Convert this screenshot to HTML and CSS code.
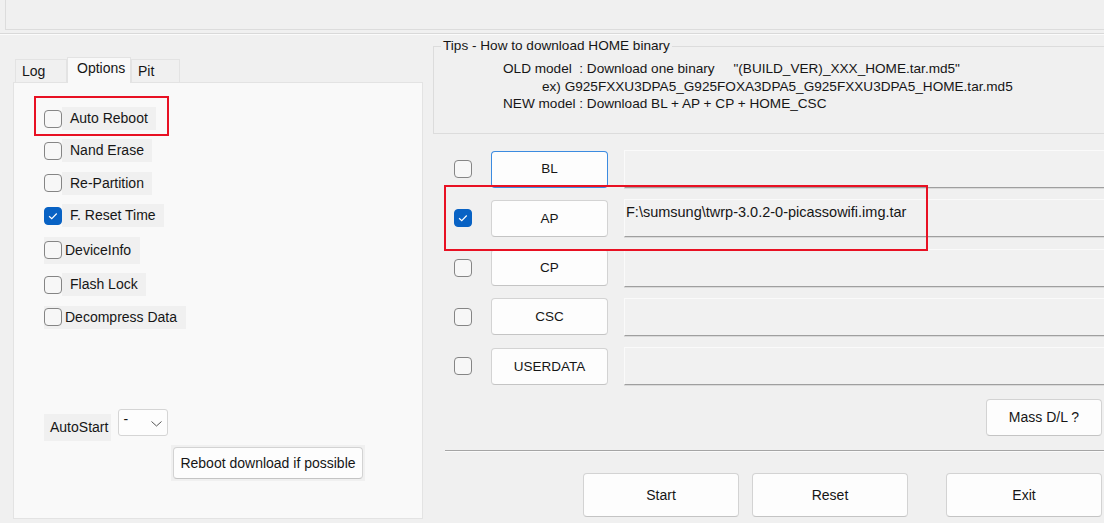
FILE: index.html
```html
<!DOCTYPE html>
<html lang="en">
<head>
    <meta charset="UTF-8">
    <meta name="viewport" content="width=device-width, initial-scale=1.0">
    <title>Odin - Options</title>
    <link rel="stylesheet" href="styles.css">
</head>
<body>
    <div class="topbox"></div>
    <div class="topsep"></div>

    <div class="main">
        <div class="left">
            <div class="tabs">
                <div class="tab">Log</div>
                <div class="tab active">Options</div>
                <div class="tab pit">Pit</div>
            </div>
            <div class="panel">
                <div class="mark">
                    <div class="opt"><span class="cb"></span><span class="lbl">Auto Reboot</span></div>
                </div>
                <div class="opt"><span class="cb"></span><span class="lbl">Nand Erase</span></div>
                <div class="opt"><span class="cb"></span><span class="lbl">Re-Partition</span></div>
                <div class="opt">
                    <span class="cb on"><svg viewBox="0 0 18 18" width="16" height="16"><path d="M4.6 9.3 7.6 12.1 13.2 6.2" fill="none" stroke="#fff" stroke-width="1.3"/></svg></span>
                    <span class="lbl">F. Reset Time</span>
                </div>
                <div class="opt boxed tall"><span class="cb"></span><span class="lbl">DeviceInfo</span></div>
                <div class="opt"><span class="cb"></span><span class="lbl">Flash Lock</span></div>
                <div class="opt boxed"><span class="cb"></span><span class="lbl">Decompress Data</span></div>

                <div class="autostart">
                    <span class="as-label">AutoStart</span>
                    <div class="select">
                        <span class="sel-value">-</span>
                        <svg class="chev" viewBox="0 0 11 6" width="11" height="6"><path d="M0.5 0.5 5.5 5 10.5 0.5" fill="none" stroke="#555" stroke-width="1"/></svg>
                    </div>
                </div>
                <div class="reboot-wrap">
                    <button class="btn reboot">Reboot download if possible</button>
                </div>
            </div>
        </div>

        <div class="right">
            <fieldset class="tips">
                <legend>Tips - How to download HOME binary</legend>
                <div class="tips-body">
                    <div class="line">OLD model  : Download one binary     "(BUILD_VER)_XXX_HOME.tar.md5"</div>
                    <div class="line ex">ex) G925FXXU3DPA5_G925FOXA3DPA5_G925FXXU3DPA5_HOME.tar.md5</div>
                    <div class="line">NEW model : Download BL + AP + CP + HOME_CSC</div>
                </div>
            </fieldset>

            <div class="files">
                <div class="file-row">
                    <span class="cb"></span>
                    <button class="btn file focus">BL</button>
                    <div class="path"></div>
                </div>
                <div class="file-row marked">
                    <span class="cb on"><svg viewBox="0 0 18 18" width="16" height="16"><path d="M4.6 9.3 7.6 12.1 13.2 6.2" fill="none" stroke="#fff" stroke-width="1.3"/></svg></span>
                    <button class="btn file">AP</button>
                    <div class="path">F:\sumsung\twrp-3.0.2-0-picassowifi.img.tar</div>
                </div>
                <div class="file-row">
                    <span class="cb"></span>
                    <button class="btn file">CP</button>
                    <div class="path"></div>
                </div>
                <div class="file-row">
                    <span class="cb"></span>
                    <button class="btn file">CSC</button>
                    <div class="path"></div>
                </div>
                <div class="file-row">
                    <span class="cb"></span>
                    <button class="btn file">USERDATA</button>
                    <div class="path"></div>
                </div>
            </div>

            <div class="mass">
                <button class="btn">Mass D/L ?</button>
            </div>
            <div class="rule"></div>
            <div class="actions">
                <button class="btn">Start</button>
                <button class="btn">Reset</button>
                <button class="btn exit">Exit</button>
            </div>
        </div>
    </div>
</body>
</html>
```

FILE: styles.css
```css
* { box-sizing: border-box; }
html, body { margin: 0; }
body {
    width: 1104px;
    height: 523px;
    overflow: hidden;
    background: #f0f0f0;
    font-family: "Liberation Sans", Arial, sans-serif;
    font-size: 14px;
    color: #161616;
}

/* top strip */
.topbox {
    height: 31px;
    margin: -1px 0 0 5px;
    border: 1px solid #dcdcdc;
    border-right: none;
}
.topsep {
    margin-top: 3px;
    border-top: 1px solid #d9d9d9;
    border-bottom: 1px solid #fbfbfb;
}

.main { display: flex; height: 488px; }

/* left: tabbed options */
.left { width: 423px; flex-shrink: 0; padding-left: 13px; }
.tabs {
    display: flex;
    align-items: flex-end;
    height: 25px;
    margin: 22px 0 0 2px;
}
.tab {
    width: 52px;
    height: 23px;
    padding-left: 6px;
    line-height: 22px;
    border: 1px solid #e3e3e3;
    border-bottom: none;
    background: #f0f0f0;
}
.tab.active {
    position: relative;
    z-index: 1;
    width: 64px;
    height: 26px;
    margin-bottom: -1px;
    padding-left: 9px;
    line-height: 20px;
    background: #f9f9f9;
}
.tab.pit { width: 49px; }

.panel {
    height: 437px;
    padding: 13px 0 0 30px;
    border: 1px solid #e3e3e3;
    background: #f9f9f9;
    display: flex;
    flex-direction: column;
    align-items: flex-start;
}
.mark {
    margin-left: -10px;
    padding: 9px 11px 4px 8px;
    border: 2px solid #e81123;
}
.opt {
    display: flex;
    align-items: center;
    height: 23px;
    margin-top: 9.5px;
}
.mark .opt { margin-top: 0; }
.mark + .opt { margin-top: 3px; }
.opt.tall { height: 27px; }
.cb {
    width: 18px;
    height: 18px;
    flex-shrink: 0;
    border: 1px solid #858585;
    border-radius: 4px;
    background: #f7f7f7;
}
.cb.on {
    display: flex;
    align-items: center;
    justify-content: center;
    border-color: #0862c4;
    background: #0862c4;
}
.lbl {
    height: 100%;
    line-height: 23px;
    padding: 0 8px;
    background: #f0f0f0;
}
.opt.tall .lbl { line-height: 27px; }
.opt.boxed { background: #f0f0f0; }
.opt.boxed .lbl { padding: 0 9px 0 3px; }

.autostart {
    display: flex;
    align-items: flex-start;
    margin-top: 80px;
}
.as-label {
    height: 27px;
    margin-top: 5px;
    padding: 0 3px 0 6px;
    line-height: 27px;
    background: #f0f0f0;
}
.select {
    display: flex;
    justify-content: space-between;
    width: 50px;
    height: 27px;
    margin-left: 7px;
    padding: 2px 5px 0 4px;
    border: 1px solid #d5d5d5;
    border-radius: 3px;
    background: #fdfdfd;
    line-height: 14px;
}
.chev { margin-top: 9px; }
.reboot-wrap {
    margin: 4px 0 0 127px;
    padding: 2px;
    background: #f0f0f0;
}

.btn {
    padding: 0;
    font: inherit;
    color: inherit;
    background: #fdfdfd;
    border: 1px solid #d3d3d3;
    border-bottom-color: #c4c4c4;
    border-radius: 4px;
}
.btn.reboot { width: 190px; height: 32px; }

/* right: tips + files */
.right { flex: 1; min-width: 0; margin-left: 10px; }
.tips {
    min-width: 0;
    margin: 3px -4px 0 0;
    padding: 6px 0 20px 7px;
    border: 1px solid #dcdcdc;
    font-size: 13.6px;
}
.tips legend { padding: 0 2px; line-height: 16px; }
.tips-body { padding-left: 62px; line-height: 17.5px; }
.tips-body .line { white-space: pre; }
.tips-body .ex { padding-left: 39px; }

.files { margin-top: 17px; }
.file-row {
    display: flex;
    align-items: center;
    height: 37px;
    margin-top: 12.25px;
    padding-left: 21px;
}
.file-row:first-child { margin-top: 0; }
.file-row.marked { position: relative; }
.file-row.marked::after {
    content: '';
    position: absolute;
    left: 11px;
    top: -15px;
    width: 480px;
    height: 62px;
    border: 2px solid #e81123;
    pointer-events: none;
}
.btn.file {
    width: 117px;
    height: 37px;
    margin-left: 19px;
    font-size: 13.5px;
}
.btn.focus {
    border: 1px solid #3c8be0;
    border-bottom-width: 2px;
}
.path {
    flex: 1;
    height: 38px;
    margin: 0 -4px 0 16px;
    padding: 4px 0 0 1px;
    background: #f1f1f1;
    border: 1px solid #fafafa;
    border-bottom: 1px solid #9f9f9f;
    box-shadow: 0 1px 0 #dadada;
    font-size: 14.5px;
}

.mass {
    display: flex;
    justify-content: flex-end;
    margin-top: 14px;
    padding-right: 2px;
}
.mass .btn { width: 116px; height: 37px; }
.rule {
    margin: 14px 0 0 12px;
    border-top: 1px solid #a5a5a5;
    border-bottom: 1px solid #fafafa;
}
.actions {
    display: flex;
    justify-content: flex-end;
    gap: 13px;
    margin-top: 21px;
    padding-right: 2px;
}
.actions .btn { width: 156px; height: 44px; }
.actions .exit { margin-left: 25px; }
```
